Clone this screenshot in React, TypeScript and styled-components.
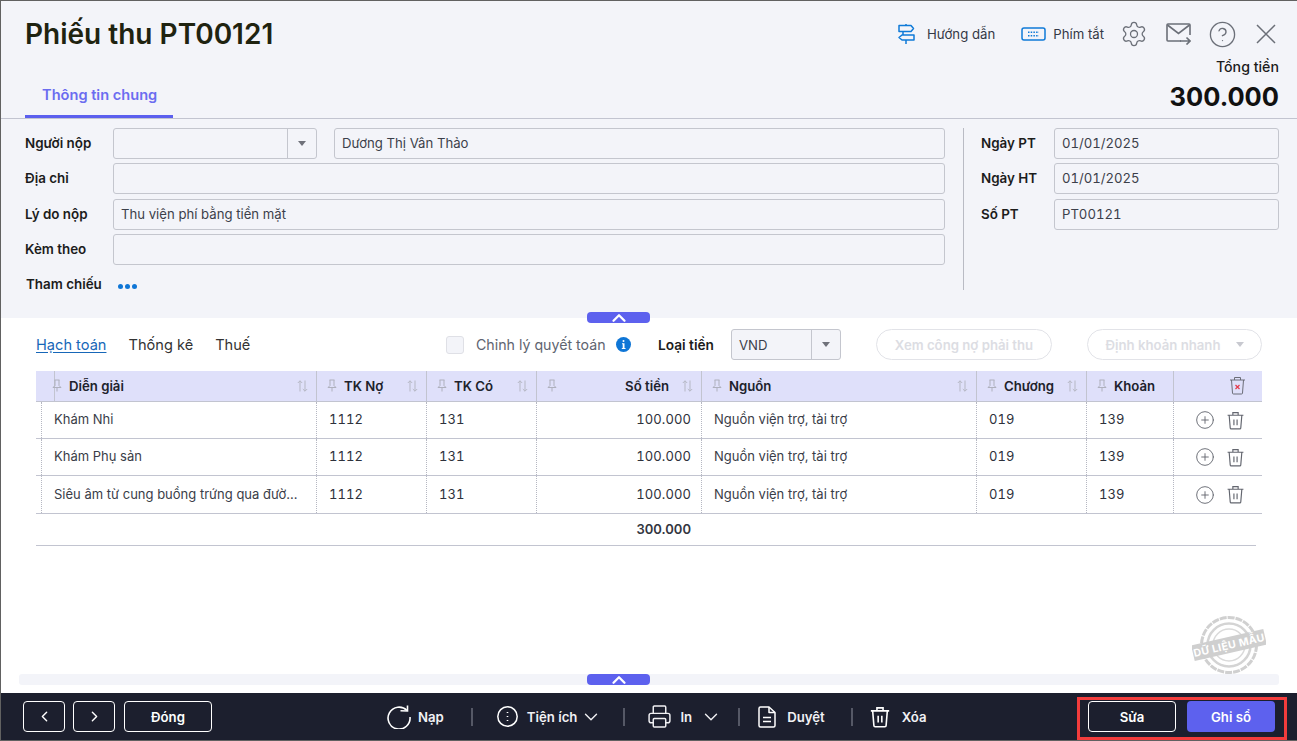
import React from 'react';
import styled, { createGlobalStyle } from 'styled-components';
import { ChevronDown, ChevronLeft, ChevronRight, ChevronUp, CirclePlus, CircleHelp, Settings, Printer } from 'lucide-react';

const GlobalStyle = createGlobalStyle`
  html, body {
    margin: 0;
    padding: 0;
    background: #ffffff;
  }
  * {
    box-sizing: border-box;
  }
  body {
    font-family: Inter, "Liberation Sans", sans-serif;
    font-size: 13px;
    color: #212121;
  }
`;

const Page = styled.div`
  width: 1297px;
  height: 741px;
  display: flex;
  flex-direction: column;
  border-top: 1px solid #616161;
  border-left: 1px solid #616161;
  border-bottom: 1px solid #616161;
  overflow: hidden;
  position: relative;
`;

const Header = styled.header`
  height: 118px;
  flex: none;
  display: flex;
  justify-content: space-between;
  background: #f3f4f9;
  border-bottom: 1px solid #c2c4d0;
  padding: 0 18px 0 24px;
`;

const HeaderLeft = styled.div`
  display: flex;
  flex-direction: column;
  justify-content: space-between;
`;

const Title = styled.h1`
  margin: 16px 0 0;
  font-size: 28px;
  line-height: 34px;
  font-weight: 600;
  color: #1f2310;
`;

const Tab = styled.div`
  width: 148px;
  height: 38px;
  padding: 5px 0 0 17px;
  font-size: 14.6px;
  line-height: 20px;
  font-weight: 600;
  color: #6b6cf0;
  border-bottom: 3px solid #5b5fee;
`;

const HeaderRight = styled.div`
  display: flex;
  flex-direction: column;
  align-items: flex-end;
`;

const Tools = styled.div`
  display: flex;
  align-items: center;
  height: 24px;
  margin-top: 21px;
  margin-right: 3px;
`;

const ToolLink = styled.div<{ $gap: number; $after: number }>`
  display: flex;
  align-items: center;
  gap: ${p => p.$gap}px;
  margin-right: ${p => p.$after}px;
  font-size: 13.2px;
  color: #333845;
  white-space: nowrap;
`;

const ToolIcon = styled.span<{ $after?: number }>`
  display: flex;
  margin-right: ${p => p.$after ?? 0}px;
  color: #6b6f78;
`;

const TotalLabel = styled.div`
  margin-top: 12px;
  font-size: 14.2px;
  line-height: 18px;
  font-weight: 500;
  color: #1c1c1c;
`;

const TotalValue = styled.div`
  margin-top: 3px;
  font-size: 25.5px;
  line-height: 36px;
  font-weight: 700;
  color: #111111;
`;

const FormArea = styled.section`
  height: 199px;
  flex: none;
  display: flex;
  background: #f3f4f9;
  padding: 9px 18px 0 24px;
`;

const FormLeft = styled.div`
  width: 920px;
  display: flex;
  flex-direction: column;
  gap: 4.45px;
`;

const FormRow = styled.div`
  display: flex;
  align-items: center;
`;

const Label = styled.label<{ $width: number }>`
  width: ${p => p.$width}px;
  flex: none;
  margin-top: -1px;
  font-size: 13.4px;
  font-weight: 600;
  color: #1c1c1c;
`;

const Field = styled.div<{ $width?: number; $offset?: number }>`
  height: 31px;
  flex: ${p => (p.$width ? 'none' : 1)};
  width: ${p => (p.$width ? `${p.$width}px` : 'auto')};
  margin-left: ${p => p.$offset ?? 0}px;
  padding: 0 7px 1px;
  display: flex;
  align-items: center;
  font-size: 13.15px;
  color: #3c3f4a;
  background: #f3f4f9;
  border: 1px solid #c4c6ce;
  border-radius: 3px;
`;

const DigitField = styled(Field)`
  font-variant-numeric: tabular-nums;
`;

const ComboBox = styled(Field)`
  padding: 0;
  justify-content: space-between;
  flex: none;
`;

const ComboValue = styled.span`
  padding-left: 7px;
`;

const ComboButton = styled.span`
  width: 29px;
  height: 100%;
  flex: none;
  display: flex;
  align-items: center;
  justify-content: center;
  border-left: 1px solid #c4c6ce;
`;

const Caret = styled.span<{ $color?: string }>`
  width: 0;
  height: 0;
  border-left: 4.5px solid transparent;
  border-right: 4.5px solid transparent;
  border-top: 5px solid ${p => p.$color ?? '#6f717a'};
`;

const RefRow = styled(FormRow)`
  height: 31px;
`;

const RefLabel = styled(Label)`
  padding-left: 1px;
  margin-top: -2px;
`;

const Dots = styled.span`
  display: flex;
  gap: 2px;
  margin-left: 5px;
  margin-top: 2px;
`;

const Dot = styled.i`
  width: 5px;
  height: 5px;
  border-radius: 50%;
  background: #0f76d6;
`;

const FormDivider = styled.div`
  width: 1px;
  height: 162px;
  margin: 0 17px 0 18px;
  background: #b9bbc4;
`;

const FormRight = styled.div`
  flex: 1;
  display: flex;
  flex-direction: column;
  gap: 4.45px;
`;

const Collapse = styled.div<{ $top: number }>`
  position: absolute;
  top: ${p => p.$top}px;
  left: 586px;
  width: 63px;
  height: 11px;
  display: flex;
  align-items: center;
  justify-content: center;
  color: #ffffff;
  background: #5d61ee;
  border-radius: 4px;
  z-index: 2;
  svg {
    flex: none;
    overflow: visible;
  }
`;

const Content = styled.main`
  flex: 1;
  display: flex;
  flex-direction: column;
  background: #ffffff;
  padding: 11px 34px 0 35px;
  position: relative;
`;

const ToolBar = styled.div`
  height: 31px;
  display: flex;
  align-items: center;
`;

const SubTabs = styled.div`
  width: 234px;
  flex: none;
  display: flex;
  gap: 22px;
`;

const SubTab = styled.span<{ $active?: boolean }>`
  white-space: nowrap;
  font-size: 14.6px;
  color: ${p => (p.$active ? '#1767b8' : '#333333')};
  text-decoration: ${p => (p.$active ? 'underline' : 'none')};
  text-underline-offset: 2px;
`;

const CheckBox = styled.span`
  width: 18px;
  height: 18px;
  flex: none;
  margin-left: 176px;
  background: #f3f4f9;
  border: 1px solid #dfe0e6;
  border-radius: 3px;
`;

const CheckLabel = styled.span`
  width: 130px;
  flex: none;
  margin-left: 12px;
  font-size: 14.2px;
  white-space: nowrap;
  color: #5e6470;
`;

const InfoIcon = styled.span`
  display: flex;
  margin-left: 10px;
`;

const CurrencyLabel = styled.span`
  width: 56px;
  flex: none;
  margin-left: 27px;
  font-size: 13.7px;
  font-weight: 600;
  white-space: nowrap;
  color: #1c1c1c;
`;

const CurrencySelect = styled(ComboBox)`
  margin-left: 17px;
`;

const GhostButton = styled.button<{ $width: number; $after: number }>`
  width: ${p => p.$width}px;
  height: 31px;
  flex: none;
  margin-left: ${p => p.$after}px;
  display: flex;
  align-items: center;
  justify-content: center;
  gap: 15px;
  padding: 0;
  font-family: inherit;
  font-size: 13.2px;
  font-weight: 600;
  color: #dcdde3;
  background: #ffffff;
  border: 1px solid #e2e3e8;
  border-radius: 16px;
`;

const Columns = '6px 275px 110px 110px 165px 275px 110px 87px 88px';

const Table = styled.div`
  margin-top: 11px;
  width: 1226px;
`;

const HeadRow = styled.div`
  height: 31px;
  display: grid;
  grid-template-columns: ${Columns};
  background: #dfe0fa;
  border-bottom: 1px solid #c2c4d0;
`;

const HeadCell = styled.div`
  display: flex;
  align-items: center;
  padding: 0 8px 1px 10px;
  font-size: 13.2px;
  font-weight: 600;
  color: #20222c;
  border-right: 1px solid #c2c4d0;
  &:last-child {
    border-right: none;
    padding-left: 55px;
  }
`;

const HeadText = styled.span<{ $right?: boolean }>`
  flex: 1;
  margin-left: 7px;
  text-align: ${p => (p.$right ? 'right' : 'left')};
  padding-right: ${p => (p.$right ? '13px' : '0')};
`;

const BodyRow = styled.div<{ $height: number }>`
  height: ${p => p.$height}px;
  display: grid;
  grid-template-columns: ${Columns};
  border-bottom: 1px solid #c2c4d0;
`;

const Cell = styled.div<{ $right?: boolean; $pad?: number }>`
  display: flex;
  align-items: center;
  justify-content: ${p => (p.$right ? 'flex-end' : 'flex-start')};
  padding: 0 ${p => (p.$right ? 10 : 12)}px 2px ${p => p.$pad ?? 12}px;
  font-size: 13px;
  color: #3a3d48;
  border-right: 1px dotted #b5b7c2;
  white-space: nowrap;
  overflow: hidden;
  &:first-child {
    border-right: 1px dotted #b5b7c2;
    padding: 0;
  }
  &:last-child {
    border-right: none;
  }
`;

const NumberText = styled.span`
  font-variant-numeric: tabular-nums;
  letter-spacing: 0.1px;
  color: #2e313b;
`;

const RowActions = styled.div`
  display: flex;
  align-items: center;
  gap: 11px;
  padding-left: 21px;
  margin-top: 2px;
  color: #63666f;
`;

const SummaryRow = styled.div`
  width: 1220px;
  height: 32px;
  display: flex;
  align-items: center;
  border-bottom: 1px solid #c2c4d0;
`;

const SummaryValue = styled.span`
  width: 655px;
  padding-bottom: 1px;
  text-align: right;
  font-size: 13px;
  font-weight: 600;
  color: #33363f;
`;

const Stamp = styled.div`
  position: absolute;
  right: 31px;
  bottom: 18px;
  display: flex;
`;

const StampText = styled.text`
  font-family: Inter, sans-serif;
  font-size: 10.5px;
  font-weight: 700;
  letter-spacing: 0.4px;
  fill: #ffffff;
`;

const ScrollStrip = styled.div`
  position: absolute;
  left: 18px;
  right: 18px;
  bottom: 8px;
  height: 11px;
  background: #f3f4f9;
  border-radius: 3px;
`;

const Footer = styled.footer`
  height: 47px;
  flex: none;
  display: flex;
  align-items: center;
  padding: 0 10px 0 22px;
  background: #1c1f2e;
`;

const NavGroup = styled.div`
  display: flex;
  gap: 8px;
  width: 364px;
`;

const OutlineButton = styled.button<{ $width: number; $offset?: number }>`
  width: ${p => p.$width}px;
  height: 31px;
  margin-left: ${p => p.$offset ?? 0}px;
  padding: 0;
  display: flex;
  align-items: center;
  justify-content: center;
  font-family: inherit;
  font-size: 13.2px;
  font-weight: 600;
  color: #ffffff;
  background: transparent;
  border: 1px solid #ffffff;
  border-radius: 4px;
`;

const Actions = styled.div`
  display: flex;
  align-items: center;
`;

const Action = styled.div<{ $gap: number }>`
  display: flex;
  align-items: center;
  gap: ${p => p.$gap}px;
  font-size: 13.2px;
  font-weight: 600;
  color: #f1f1f4;
`;

const ActionDivider = styled.span<{ $before: number; $after: number }>`
  width: 2px;
  height: 18px;
  margin: 0 ${p => p.$after}px 0 ${p => p.$before}px;
  background: #555866;
`;

const Highlight = styled.div`
  height: 43px;
  width: 210px;
  margin-left: auto;
  align-self: flex-end;
  display: flex;
  align-items: center;
  gap: 11px;
  padding: 0 9px 4px 8px;
  border: 3px solid #f23c3c;
`;

const PrimaryButton = styled.button`
  width: 88px;
  height: 31px;
  padding: 0;
  font-family: inherit;
  font-size: 13.2px;
  font-weight: 600;
  color: #ffffff;
  background: #5d61ee;
  border: none;
  border-radius: 4px;
`;

const SignIcon = () => (
  <svg width="20" height="22" viewBox="0 0 20 22" fill="none" stroke="#0f7ad8" strokeWidth="1.5" strokeLinejoin="round">
    <path d="M2 2.5h12l2.5 3-2.500 3H2z" />
    <path d="M6 8.500v3M17 12H5l-3 2.500L5 17h12z" />
    <path d="M9 1v1.500M9 17v4" />
  </svg>
);

const KeyboardIcon = () => (
  <svg width="25" height="14" viewBox="0 0 25 14" fill="none">
    <rect x="1" y="1" width="23" height="12" rx="2" stroke="#0f7ad8" strokeWidth="1.500" />
    <path d="M7 5.200h11M7 8.800h11" stroke="#0f7ad8" strokeWidth="1.500" strokeDasharray="1.500 1.200" />
  </svg>
);

const MailIcon = () => (
  <svg width="25" height="22" viewBox="0 0 25 22" fill="none" stroke="#6b6f78" strokeWidth="1.600">
    <path d="M15 18H2a1 1 0 0 1-1-1V2a1 1 0 0 1 1-1h21a1 1 0 0 1 1 1v10" />
    <path d="M1.500 2 12.500 10.500 23.500 2" />
    <path d="M14 18h10M20.500 14.500 24 18l-3.500 3.500" />
  </svg>
);

const CloseIcon = () => (
  <svg width="20" height="20" viewBox="0 0 20 20" fill="none" stroke="#6b6f78" strokeWidth="1.500">
    <path d="M1 1l18 18M19 1 1 19" />
  </svg>
);

const InfoBadge = () => (
  <svg width="15" height="15" viewBox="0 0 15 15">
    <circle cx="7.500" cy="7.500" r="7.500" fill="#0f76d6" />
    <rect x="6.500" y="3" width="2" height="2" rx="1" fill="#fff" />
    <path d="M6 6.300h2.500v4.700h1v1H5.800v-1h.9V7.300H6z" fill="#fff" />
  </svg>
);

const PinIcon = () => (
  <svg width="10" height="13" viewBox="0 0 10 13" fill="none" stroke="#aeb0bd" strokeWidth="1" style={{ flex: 'none' }}>
    <path d="M2.500 1h5M3 1v5.500L1 8.500h8L7 6.500V1M5 8.500V12.500" />
  </svg>
);

const SortIcon = () => (
  <svg width="11" height="12" viewBox="0 0 11 12" fill="none" stroke="#b5b7c4" strokeWidth="1" style={{ flex: 'none' }}>
    <path d="M3 11.500V.8M.8 3 3 .8 5.200 3M8 .5v10.700M5.800 9 8 11.200 10.200 9" />
  </svg>
);

const TrashIcon = ({ size = 19, color = '#63666f', width = 1.100 }: { size?: number; color?: string; width?: number }) => (
  <svg width={size} height={size} viewBox="0 0 18 18" fill="none" stroke={color} strokeWidth={width}>
    <path d="M1.500 4h15M6.500 4V1.500h5V4M3 4l1 12a1 1 0 0 0 1 1h8a1 1 0 0 0 1-1l1-12M7.500 8v5.500M10.500 8v5.500" />
  </svg>
);

const HeadTrashIcon = () => (
  <svg width="17" height="19" viewBox="0 0 17 19" fill="none" stroke="#6b6d78" strokeWidth="1">
    <path d="M1 4h15M5.500 4V1.500h6V4M2.500 4l1 13a1 1 0 0 0 1 1h8a1 1 0 0 0 1-1l1-13" />
    <path d="M6.500 9l4 4M10.500 9l-4 4" stroke="#e5394a" strokeWidth="1.200" />
  </svg>
);

const ReloadIcon = () => (
  <svg width="24" height="24" viewBox="0 0 24 24" fill="none" stroke="#ffffff" strokeWidth="1.600">
    <path d="M20 5.500A11 11 0 1 0 23 12" />
    <path d="M13.500 5.800 20.500 6V.5" />
  </svg>
);

const MoreIcon = () => (
  <svg width="21" height="21" viewBox="0 0 21 21" fill="none">
    <circle cx="10.500" cy="10.500" r="9.700" stroke="#ffffff" strokeWidth="1.500" />
    <path d="M10.500 6v1M10.500 10v1M10.500 14v1" stroke="#ffffff" strokeWidth="1.600" />
  </svg>
);

const FileIcon = () => (
  <svg width="18" height="22" viewBox="0 0 18 22" fill="none" stroke="#ffffff" strokeWidth="1.500" strokeLinejoin="round">
    <path d="M2.500 1H11l6 5.500V19.500a1.500 1.500 0 0 1-1.500 1.500h-13A1.500 1.500 0 0 1 1 19.500v-17A1.500 1.500 0 0 1 2.500 1z" />
    <path d="M11 1v5.500h6M5 11.500h8M5 15.500h8" />
  </svg>
);

const StampIcon = () => (
  <svg width="74" height="60" viewBox="0 0 74 60" fill="none">
    <circle cx="37" cy="30" r="27.500" stroke="#d0d0d0" strokeWidth="3" strokeDasharray="7 1" />
    <circle cx="37" cy="30" r="21.500" stroke="#d4d4d4" strokeWidth="2.500" />
    <circle cx="37" cy="30" r="16" stroke="#dadada" strokeWidth="1.500" />
    <g transform="rotate(-13 37 30)">
      <rect x="0" y="22" width="74" height="16" fill="#cfcfcf" />
      <StampText x="37" y="34" textAnchor="middle">DỮ LIỆU MẪU</StampText>
    </g>
  </svg>
);

const headers = [
  { title: 'Diễn giải', sort: true },
  { title: 'TK Nợ', sort: true },
  { title: 'TK Có', sort: true },
  { title: 'Số tiền', sort: true, right: true },
  { title: 'Nguồn', sort: true },
  { title: 'Chương', sort: true },
  { title: 'Khoản', sort: false },
];

const rows = [
  { text: 'Khám Nhi', height: 37 },
  { text: 'Khám Phụ sản', height: 37 },
  { text: 'Siêu âm từ cung buồng trứng qua đườ...', height: 38 },
];

const App = () => (
  <Page>
    <GlobalStyle />
    <Header>
      <HeaderLeft>
        <Title>Phiếu thu PT00121</Title>
        <Tab>Thông tin chung</Tab>
      </HeaderLeft>
      <HeaderRight>
        <Tools>
          <ToolLink $gap={10} $after={26}><SignIcon />Hướng dẫn</ToolLink>
          <ToolLink $gap={7} $after={16}><KeyboardIcon />Phím tắt</ToolLink>
          <ToolIcon $after={18}><Settings size={28} strokeWidth={1.100} /></ToolIcon>
          <ToolIcon $after={17}><MailIcon /></ToolIcon>
          <ToolIcon $after={19}><CircleHelp size={29} strokeWidth={1.100} /></ToolIcon>
          <ToolIcon><CloseIcon /></ToolIcon>
        </Tools>
        <TotalLabel>Tổng tiền</TotalLabel>
        <TotalValue>300.000</TotalValue>
      </HeaderRight>
    </Header>

    <FormArea>
      <FormLeft>
        <FormRow>
          <Label $width={88}>Người nộp</Label>
          <ComboBox $width={204}>
            <ComboValue />
            <ComboButton><Caret /></ComboButton>
          </ComboBox>
          <Field $offset={17}>Dương Thị Vân Thảo</Field>
        </FormRow>
        <FormRow>
          <Label $width={88}>Địa chỉ</Label>
          <Field />
        </FormRow>
        <FormRow>
          <Label $width={88}>Lý do nộp</Label>
          <Field>Thu viện phí bằng tiền mặt</Field>
        </FormRow>
        <FormRow>
          <Label $width={88}>Kèm theo</Label>
          <Field />
        </FormRow>
        <RefRow>
          <RefLabel $width={88}>Tham chiếu</RefLabel>
          <Dots><Dot /><Dot /><Dot /></Dots>
        </RefRow>
      </FormLeft>
      <FormDivider />
      <FormRight>
        <FormRow>
          <Label $width={73}>Ngày PT</Label>
          <DigitField>01/01/2025</DigitField>
        </FormRow>
        <FormRow>
          <Label $width={73}>Ngày HT</Label>
          <DigitField>01/01/2025</DigitField>
        </FormRow>
        <FormRow>
          <Label $width={73}>Số PT</Label>
          <DigitField>PT00121</DigitField>
        </FormRow>
      </FormRight>
    </FormArea>

    <Collapse $top={311}><ChevronUp size={22} strokeWidth={2.500} /></Collapse>

    <Content>
      <ToolBar>
        <SubTabs>
          <SubTab $active>Hạch toán</SubTab>
          <SubTab>Thống kê</SubTab>
          <SubTab>Thuế</SubTab>
        </SubTabs>
        <CheckBox />
        <CheckLabel>Chỉnh lý quyết toán</CheckLabel>
        <InfoIcon><InfoBadge /></InfoIcon>
        <CurrencyLabel>Loại tiền</CurrencyLabel>
        <CurrencySelect $width={110}>
          <ComboValue>VND</ComboValue>
          <ComboButton><Caret /></ComboButton>
        </CurrencySelect>
        <GhostButton $width={176} $after={35}>Xem công nợ phải thu</GhostButton>
        <GhostButton $width={175} $after={35}>Định khoản nhanh<Caret $color="#c8c9d0" /></GhostButton>
      </ToolBar>

      <Table>
        <HeadRow>
          <HeadCell />
          {headers.map(({ title, sort, right }) => (
            <HeadCell key={title}>
              <PinIcon />
              <HeadText $right={right}>{title}</HeadText>
              {sort && <SortIcon />}
            </HeadCell>
          ))}
          <HeadCell><HeadTrashIcon /></HeadCell>
        </HeadRow>
        {rows.map(({ text, height }) => (
          <BodyRow key={text} $height={height}>
            <Cell />
            <Cell>{text}</Cell>
            <Cell><NumberText>1112</NumberText></Cell>
            <Cell><NumberText>131</NumberText></Cell>
            <Cell $right><NumberText>100.000</NumberText></Cell>
            <Cell>Nguồn viện trợ, tài trợ</Cell>
            <Cell><NumberText>019</NumberText></Cell>
            <Cell><NumberText>139</NumberText></Cell>
            <Cell $pad={0}>
              <RowActions>
                <CirclePlus size={20} strokeWidth={1.100} />
                <TrashIcon />
              </RowActions>
            </Cell>
          </BodyRow>
        ))}
        <SummaryRow><SummaryValue>300.000</SummaryValue></SummaryRow>
      </Table>

      <Stamp><StampIcon /></Stamp>
      <ScrollStrip />
    </Content>

    <Collapse $top={673}><ChevronUp size={22} strokeWidth={2.500} /></Collapse>

    <Footer>
      <NavGroup>
        <OutlineButton $width={42}><ChevronLeft size={17} strokeWidth={2} /></OutlineButton>
        <OutlineButton $width={42}><ChevronRight size={17} strokeWidth={2} /></OutlineButton>
        <OutlineButton $width={88} $offset={1}>Đóng</OutlineButton>
      </NavGroup>
      <Actions>
        <Action $gap={7}><ReloadIcon />Nạp</Action>
        <ActionDivider $before={27} $after={24} />
        <Action $gap={9}><MoreIcon />Tiện ích<ChevronDown size={22} strokeWidth={1.500} style={{ marginLeft: -6 }} /></Action>
        <ActionDivider $before={21} $after={22} />
        <Action $gap={8}><Printer size={25} strokeWidth={1.400} />In<ChevronDown size={22} strokeWidth={1.500} /></Action>
        <ActionDivider $before={16} $after={18} />
        <Action $gap={11}><FileIcon />Duyệt</Action>
        <ActionDivider $before={26} $after={16} />
        <Action $gap={11}><TrashIcon size={22} color="#ffffff" width={1.300} />Xóa</Action>
      </Actions>
      <Highlight>
        <OutlineButton $width={88}>Sửa</OutlineButton>
        <PrimaryButton>Ghi sổ</PrimaryButton>
      </Highlight>
    </Footer>
  </Page>
);

export default App;
